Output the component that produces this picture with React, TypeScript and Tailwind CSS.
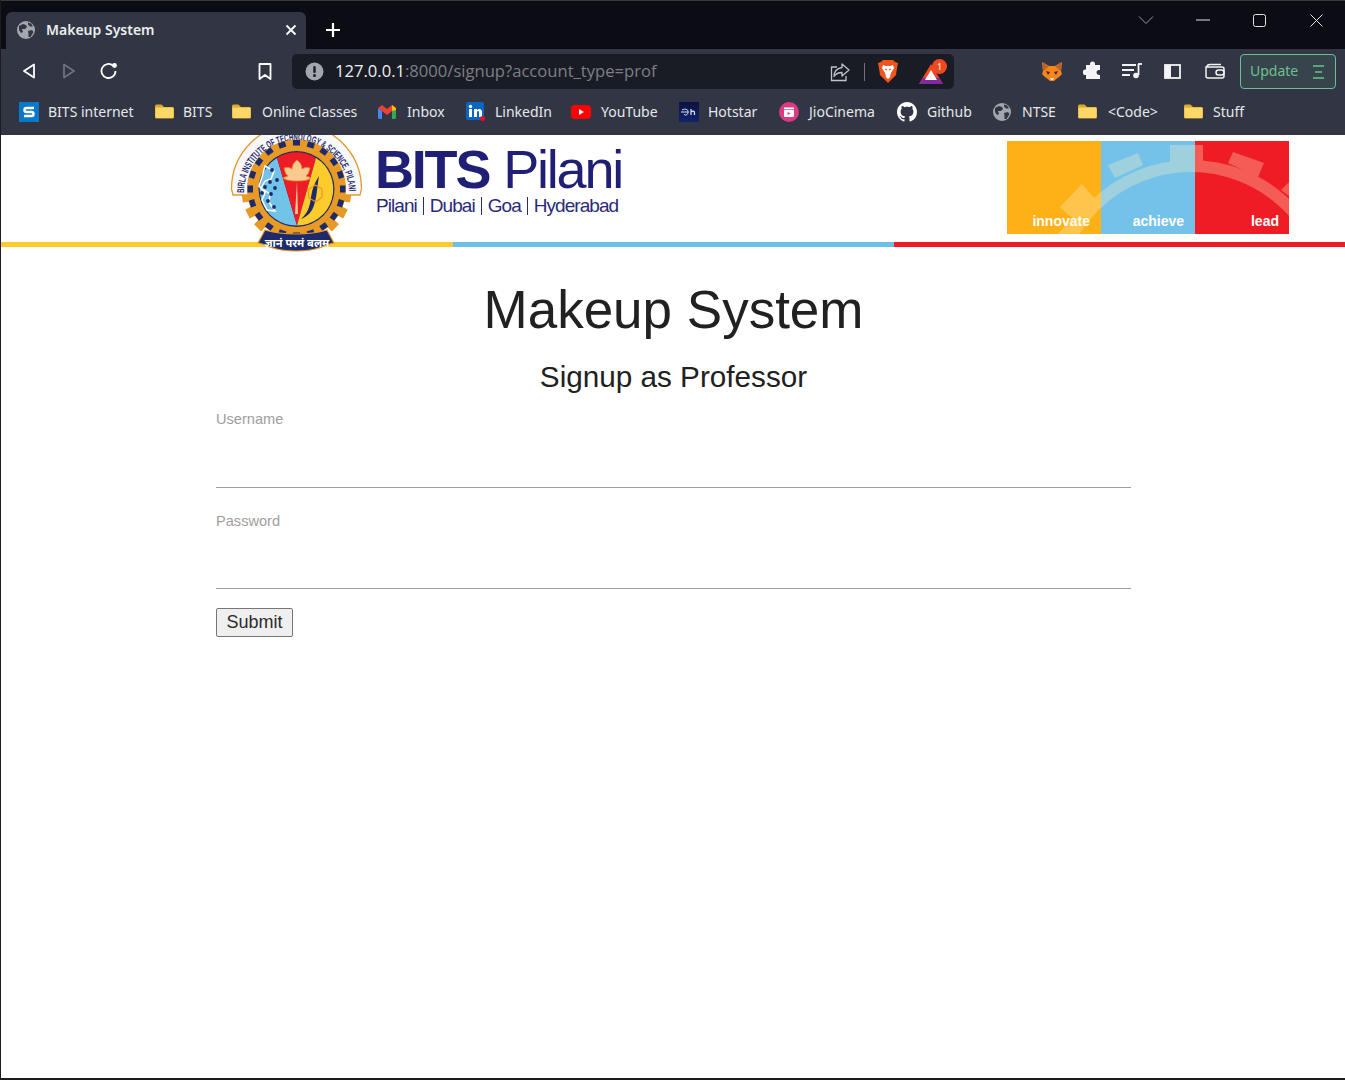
import React from "react";

const ui = { fontFamily: '"Noto Sans", "Open Sans", sans-serif' };
const arial = { fontFamily: '"Liberation Sans", Arial, sans-serif' };

function Globe({ size = 18, fill = "#a3a6ad", bg = "#323644" }: { size?: number; fill?: string; bg?: string }) {
  return (
    <svg width={size} height={size} viewBox="0 0 18 18" className="shrink-0">
      <circle cx="9" cy="9" r="9" fill={fill} />
      <path d="M2 5l4-2 3 1 1 2-2 2-3 0 1 3-2 1-2-3zM11 1.500l3 1 2 3-3 0-2-2zM11 10l4-1 1.500 2-3 5-2 0 0-3z" fill={bg} />
    </svg>
  );
}

function Folder() {
  return (
    <svg width="19" height="15" viewBox="0 0 19 15" className="shrink-0">
      <path d="M0 2a1.500 1.500 0 0 1 1.500-1.500h5L9 3h8.500A1.500 1.500 0 0 1 19 4.500V13a1.500 1.500 0 0 1-1.500 1.500h-16A1.500 1.500 0 0 1 0 13z" fill="#d9a92f" />
      <rect x="0.500" y="3.500" width="18" height="10.500" rx="1" fill="#fcd766" />
    </svg>
  );
}

function Mark({ label, icon, w, slot }: { label: string; icon: React.ReactNode; w: string; slot: string }) {
  return (
    <div className={`flex items-center shrink-0 ${w}`}>
      <span className={`shrink-0 flex items-center ${slot}`}>{icon}</span>
      <span className="text-[14px] text-[#e6e7ea] whitespace-nowrap">{label}</span>
    </div>
  );
}

const bookmarks: { label: string; w: string; slot: string; icon: React.ReactNode }[] = [
  {
    label: "BITS internet",
    w: "w-[136px]",
    slot: "w-[29px]",
    icon: (
      <svg width="20" height="20" viewBox="0 0 20 20">
        <rect width="20" height="20" fill="#0a78c8" />
        <path d="M15 6H7.500a1.500 1.500 0 0 0 0 4h5a1.700 1.700 0 0 1 0 4H5" fill="none" stroke="#fff" strokeWidth="2.400" />
      </svg>
    ),
  },
  { label: "BITS", w: "w-[77px]", slot: "w-[28px]", icon: <Folder /> },
  { label: "Online Classes", w: "w-[146px]", slot: "w-[30px]", icon: <Folder /> },
  {
    label: "Inbox",
    w: "w-[88px]",
    slot: "w-[29px]",
    icon: (
      <svg width="18" height="14" viewBox="0 0 18 14">
        <path d="M0 3v9.500A1.500 1.500 0 0 0 1.500 14H4V6z" fill="#4285f4" />
        <path d="M18 3v9.500a1.500 1.500 0 0 1-1.500 1.500H14V6z" fill="#34a853" />
        <path d="M0 3l4-3 5 4 5-4 4 3-4 3-5 4-5-4z" fill="#ea4335" />
        <path d="M14 0l4 3v2l-4 1z" fill="#fbbc04" />
      </svg>
    ),
  },
  {
    label: "LinkedIn",
    w: "w-[105px]",
    slot: "w-[29px]",
    icon: (
      <svg width="19" height="19" viewBox="0 0 19 19">
        <rect width="18" height="18" rx="2" fill="#0a66c2" />
        <rect x="3" y="7" width="3" height="8" fill="#fff" />
        <circle cx="4.500" cy="4.500" r="1.700" fill="#fff" />
        <path d="M8 7h3v1.200c1-1.800 5-2 5 1.800v5h-3v-4.500c0-2-2-2-2 0V15H8z" fill="#fff" />
        <circle cx="16.500" cy="16.500" r="2.500" fill="#e0102a" />
      </svg>
    ),
  },
  {
    label: "YouTube",
    w: "w-[108px]",
    slot: "w-[30px]",
    icon: (
      <svg width="20" height="14" viewBox="0 0 20 14">
        <rect width="20" height="14" rx="4" fill="#ff0000" />
        <path d="M8 4l5 3-5 3z" fill="#fff" />
      </svg>
    ),
  },
  {
    label: "Hotstar",
    w: "w-[100px]",
    slot: "w-[29px]",
    icon: (
      <svg width="20" height="20" viewBox="0 0 20 20">
        <defs>
          <linearGradient id="hs" x1="0" y1="0" x2="0" y2="1">
            <stop offset="0" stopColor="#0c1240" />
            <stop offset="1" stopColor="#10236e" />
          </linearGradient>
        </defs>
        <rect width="20" height="20" fill="url(#hs)" />
        <path d="M3 8c4-2 7 0 6 3s-4 2-4 1M2 10h7" fill="none" stroke="#dfe6ff" strokeWidth="1" />
        <path d="M12 7v6M12 10c2-1.500 3.500-1 3.500 1v2" fill="none" stroke="#dfe6ff" strokeWidth="1.200" />
      </svg>
    ),
  },
  {
    label: "JioCinema",
    w: "w-[118px]",
    slot: "w-[30px]",
    icon: (
      <svg width="20" height="20" viewBox="0 0 20 20">
        <circle cx="10" cy="10" r="10" fill="#dc3a82" />
        <rect x="5" y="8" width="10" height="7" rx="1" fill="#fff" />
        <path d="M5 5.500h10v1.800H5z" fill="#fff" />
        <path d="M8.500 10l3 1.500-3 1.500z" fill="#dc3a82" />
      </svg>
    ),
  },
  {
    label: "Github",
    w: "w-[96px]",
    slot: "w-[30px]",
    icon: (
      <svg width="20" height="20" viewBox="0 0 16 16">
        <path fill="#fff" d="M8 0C3.580 0 0 3.580 0 8c0 3.540 2.290 6.530 5.470 7.590.4.070.55-.17.55-.38 0-.19-.01-.82-.01-1.490-2.010.37-2.530-.49-2.690-.94-.09-.23-.48-.94-.82-1.130-.28-.15-.68-.52-.01-.53.630-.01 1.080.58 1.230.82.720 1.210 1.870.87 2.330.660.070-.52.280-.87.510-1.070-1.780-.2-3.640-.89-3.640-3.950 0-.87.310-1.590.820-2.150-.08-.2-.36-1.020.08-2.120 0 0 .67-.21 2.200.82.640-.18 1.320-.27 2-.27.680 0 1.360.09 2 .27 1.530-1.040 2.200-.82 2.200-.82.440 1.100.16 1.920.08 2.120.51.560.82 1.270.82 2.150 0 3.070-1.870 3.750-3.650 3.950.29.250.54.730.54 1.480 0 1.070-.01 1.930-.01 2.200 0 .21.150.46.550.38A8.013 8.013 0 0 0 16 8c0-4.420-3.580-8-8-8z" />
      </svg>
    ),
  },
  { label: "NTSE", w: "w-[85px]", slot: "w-[29px]", icon: <Globe /> },
  { label: "<Code>", w: "w-[106px]", slot: "w-[30px]", icon: <Folder /> },
  { label: "Stuff", w: "w-[70px]", slot: "w-[29px]", icon: <Folder /> },
];

function Emblem() {
  const cx = 67.5;
  const cy = 54;
  const teeth = Array.from({ length: 20 }, (_, i) => i * 18 + 9);
  return (
    <svg width="136" height="120" viewBox="0 0 136 120" className="absolute left-[228px] top-0">
      <defs>
        <path id="ringText" d="M15 58a52.500 52.500 0 0 1 105 0" />
      </defs>
      {teeth.map((a) => (
        <rect key={a} x={cx - 5} y={cy - 55} width="10" height="9" fill="#e79a26" transform={`rotate(${a} ${cx} ${cy})`} />
      ))}
      <path d="M2.500 54A65 65 0 0 1 132.500 54L131 60H4z" fill="#f8f8fb" stroke="#e39a2d" strokeWidth="1.300" />
      <text fontSize="10" fontWeight="700" fill="#1f2a6b" style={arial}>
        <textPath href="#ringText" textLength="163" lengthAdjust="spacingAndGlyphs">
          BIRLA INSTITUTE OF TECHNOLOGY &amp; SCIENCE, PILANI
        </textPath>
      </text>
      <circle cx={cx} cy={cy} r="49.500" fill="#e79a26" />
      {teeth.map((a) => (
        <rect key={a} x={cx - 3.500} y={cy - 49} width="7" height="5.500" fill="#1f2a6b" transform={`rotate(${a + 9} ${cx} ${cy})`} />
      ))}
      <circle cx={cx} cy={cy} r="38" fill="#1f2a6b" />
      <path d="M68 90.500L48 23A36.500 36.500 0 0 0 68 90.500z" fill="#72c3e8" />
      <path d="M68 90.500L48 23A36.500 36.500 0 0 1 87 23z" fill="#ee1c25" />
      <path d="M68 90.500L87 23A36.500 36.500 0 0 1 68 90.500z" fill="#fdcb2c" />
      <path d="M68 25c-3 2-5 5-5 9-3-2-5-2-8-1 1 3 1 6 4 8-2 1-4 1-5 2 4 3 9 3 14 3s10 0 14-3c-1-1-3-1-5-2 3-2 3-5 4-8-3-1-5-1-8 1 0-4-2-7-5-9z" fill="#f9c98f" stroke="#e07f1f" strokeWidth="0.800" />
      <path d="M68 46l-2 33h3z" fill="#f9c98f" />
      <path d="M72 84c6-5 9-12 10-22 1-8 4-15 8-21-2 11-2 23-6 32-2 5-7 9-12 11z" fill="#1f2a6b" />
      <path d="M79 55l7-5 7 4 0 8-6 5-7-4z" fill="none" stroke="#e79a26" strokeWidth="1.200" />
      <path d="M36 31l9 5-3 8-6 2-4 7 9 6-1 8 6 9-8-1-5-10 3-7-6-7 3-9z" fill="none" stroke="#fff" strokeWidth="1.500" />
      {[
        [43, 35],
        [48, 45],
        [41, 47],
        [46, 53],
        [36, 52],
        [42, 59],
        [33, 58],
        [39, 66],
        [45, 72],
      ].map(([x, y]) => (
        <circle key={`${x}-${y}`} cx={x} cy={y} r="1.900" fill="#1f2a6b" />
      ))}
      <path d="M36 95c10 3 20 4 31 4s21-1 31-4l7 13c-5 1-9 2-12 4-8 3-17 4-26 4s-18-1-26-4c-3-2-7-3-12-4z" fill="#1f2a6b" stroke="#e79a26" strokeWidth="1.200" />
      <text x="68" y="112" textAnchor="middle" fontSize="11" fontWeight="700" fill="#fff" style={{ fontFamily: '"Noto Sans", sans-serif' }}>
        ज्ञानं परमं बलम्
      </text>
    </svg>
  );
}

function BitsBanner() {
  return (
    <div className="relative h-[112px] shrink-0 bg-white">
      <div className="flex h-[107px]">
        <div className="ml-[374px] pt-[9px] text-[#1f1f75]" style={arial}>
          <div className="flex items-baseline h-[50px] leading-[50px] whitespace-nowrap">
            <span className="text-[54px] font-bold tracking-[-2.200px]">BITS</span>
            <span className="text-[54px] ml-[14px] tracking-[-2.200px]">Pilani</span>
          </div>
          <div className="ml-[1px] mt-[1px] flex items-center text-[19px] leading-[22px] tracking-[-0.950px] whitespace-nowrap text-[#2a2a7a]">
            <span>Pilani</span>
            <span className="mx-[6px] h-[18px] w-px bg-[#2a2a7a]" />
            <span>Dubai</span>
            <span className="mx-[6px] h-[18px] w-px bg-[#2a2a7a]" />
            <span>Goa</span>
            <span className="mx-[6px] h-[18px] w-px bg-[#2a2a7a]" />
            <span>Hyderabad</span>
          </div>
        </div>
        <div className="relative ml-auto mr-[56px] mt-[6px] flex h-[93px] w-[282px] text-white text-[14px] font-bold" style={arial}>
          <div className="w-[94px] h-full bg-[#feb017] flex items-end justify-end pr-[11px] pb-[2px]">innovate</div>
          <div className="w-[94px] h-full bg-[#74c2e9] flex items-end justify-end pr-[11px] pb-[2px]">achieve</div>
          <div className="w-[94px] h-full bg-[#ef1c25] flex items-end justify-end pr-[10px] pb-[2px]">lead</div>
          <svg width="282" height="93" viewBox="0 0 282 93" className="absolute left-0 top-0 pointer-events-none">
            <g opacity="0.3">
              <circle cx="184" cy="162" r="137" fill="none" stroke="#fff3c4" strokeWidth="12" />
              <path fill="#fff3c4" d="M101 24l30-12 5 12-28 13zM163 4h33v17h-33zM226 11l31 11-6 14-30-14zM274 49l8-8v14zM53 66l22-23 17 19-22 31H51l14-16z" />
            </g>
          </svg>
        </div>
      </div>
      <div className="flex h-[5px]">
        <div className="w-[452px] bg-[#fdcb2c]" />
        <div className="w-[441px] bg-[#6cc0e8]" />
        <div className="flex-1 bg-[#ef1c25]" />
      </div>
      <Emblem />
    </div>
  );
}

export default function App() {
  return (
    <div className="h-[1080px] w-[1345px] flex flex-col bg-white overflow-hidden border-l border-[#1c1c1c] border-b-2 box-border">
      {/* Title bar */}
      <div className="h-[49px] shrink-0 bg-[#0b0c14] border-t border-[#3a3a3a] flex items-end pl-[5px] relative" style={ui}>
        <div className="h-[37px] w-[300px] bg-[#323644] rounded-t-[6px] flex items-center pl-[11px] pr-[9px] pb-[1px]">
          <Globe />
          <span className="ml-[11px] mb-[1px] text-[14px] font-semibold text-[#eceded]">Makeup System</span>
          <svg width="12" height="12" viewBox="0 0 12 12" className="ml-auto">
            <path d="M1.500 1.500l9 9M10.500 1.500l-9 9" stroke="#fff" strokeWidth="1.800" />
          </svg>
        </div>
        <svg width="16" height="16" viewBox="0 0 16 16" className="ml-[19px] mb-[11px]">
          <path d="M8 1v14M1 8h14" stroke="#fff" strokeWidth="2.200" />
        </svg>
        <div className="ml-auto self-start flex items-center h-[38px] text-[#d8d8dc]">
          <svg width="16" height="10" viewBox="0 0 16 10" className="mr-[42px]">
            <path d="M1 1.500l7 7 7-7" fill="none" stroke="#9a9ba2" strokeWidth="1" />
          </svg>
          <svg width="14" height="2" viewBox="0 0 14 2" className="mr-[43px]">
            <path d="M0 1h14" stroke="#e4e4e6" strokeWidth="1" />
          </svg>
          <svg width="13" height="13" viewBox="0 0 13 13" className="mr-[44px]">
            <rect x="0.500" y="0.500" width="12" height="12" rx="2" fill="none" stroke="#e4e4e6" />
          </svg>
          <svg width="13" height="13" viewBox="0 0 13 13" className="mr-[22px]">
            <path d="M.5.500l12 12M12.500.500l-12 12" stroke="#e4e4e6" strokeWidth="1" />
          </svg>
        </div>
      </div>

      {/* Toolbar */}
      <div className="h-[40px] shrink-0 bg-[#323644] flex items-start pl-[21px]" style={ui}>
        <svg width="14" height="16" viewBox="0 0 14 16" className="mt-[14px]">
          <path d="M12 1.500v13L2 8z" fill="none" stroke="#fff" strokeWidth="1.800" strokeLinejoin="round" />
        </svg>
        <svg width="14" height="16" viewBox="0 0 14 16" className="ml-[26px] mt-[14px]">
          <path d="M2 1.500v13L12 8z" fill="none" stroke="#6f727c" strokeWidth="1.800" strokeLinejoin="round" />
        </svg>
        <svg width="18" height="18" viewBox="0 0 18 18" className="ml-[24px] mt-[13px]">
          <path d="M15.500 9a7 7 0 1 1-2.300-5.200" fill="none" stroke="#fff" strokeWidth="1.800" />
          <circle cx="14.500" cy="3.500" r="2.400" fill="#fff" />
        </svg>
        <svg width="14" height="17" viewBox="0 0 14 17" className="ml-[140px] mt-[14px]">
          <path d="M1.500 1h11v15L7 12l-5.500 4z" fill="none" stroke="#fff" strokeWidth="1.800" strokeLinejoin="round" />
        </svg>
        <div className="ml-[20px] mt-[5px] h-[35px] w-[662px] rounded-[5px] bg-[#1a1c25] flex items-center pl-[13px] pr-[7px]">
          <svg width="19" height="19" viewBox="0 0 19 19">
            <circle cx="9.500" cy="9.500" r="9" fill="#a3a6ad" />
            <rect x="8.300" y="4" width="2.400" height="7" rx="1" fill="#1a1c25" />
            <circle cx="9.500" cy="13.500" r="1.500" fill="#1a1c25" />
          </svg>
          <div className="ml-[11px] text-[16.600px] text-[#7d7f85] whitespace-nowrap" style={{ fontFamily: '"Open Sans", sans-serif' }}>
            <span className="text-[#eff0f2]">127.0.0.1</span>:8000/signup?account_type=prof
          </div>
          <svg width="20" height="20" viewBox="0 0 20 20" className="ml-auto">
            <path d="M7 5H1.500v13.500H16V14" fill="none" stroke="#c0c2c7" strokeWidth="1.300" />
            <path d="M12 2l7 6-7 6v-3.500c-4 0-6 1-8 4 0-5 3-8 8-9z" fill="none" stroke="#c0c2c7" strokeWidth="1.300" strokeLinejoin="round" />
          </svg>
          <div className="ml-[14px] w-px h-[18px] bg-[#70737b]" />
          <svg width="20" height="23" viewBox="0 0 20 23" className="ml-[13px]">
            <path d="M5 0h10l2 2 3 1-1 5-1 7-8 8-8-8-1-7-1-5 3-1z" fill="#f1541b" />
            <path d="M5 5l3 1h4l3-1 1 3-3 5-1 4-2 2-2-2-1-4-3-5z" fill="#fff" />
            <path d="M7 9l2 1M13 9l-2 1" stroke="#f1541b" strokeWidth="1.300" />
          </svg>
          <div className="relative ml-[21px] w-[28px] h-[24px]">
            <svg width="24" height="20" viewBox="0 0 24 20" className="absolute left-0 top-[4px]">
              <path d="M12 0L0 20h24z" fill="#f1491f" />
              <path d="M0 20l4-6h16l4 6z" fill="#7f2a9e" />
              <path d="M12 6l6 10H6z" fill="#fff" />
            </svg>
            <span className="absolute left-[13px] top-[-1px] w-[15px] h-[15px] rounded-full bg-[#ee4a21] text-white text-[9px] leading-[15px] text-center">1</span>
          </div>
        </div>
        <svg width="20" height="19" viewBox="0 0 20 19" className="ml-[88px] mt-[13px]">
          <path d="M0 0l7 4h6l7-4-1 9 1 3-3 3-4 3-1 1H8l-1-1-4-3-3-3 1-3z" fill="#f6851b" />
          <path d="M0 0l7 4-4 4-2 1zM20 0l-7 4 4 4 2 1z" fill="#b8652a" />
          <path d="M4 9l4 1-2 3zM16 9l-4 1 2 3z" fill="#3c2a1c" />
          <path d="M8 16h4l-1 2H9z" fill="#e9ddd0" />
        </svg>
        <svg width="20" height="20" viewBox="0 0 20 20" className="ml-[21px] mt-[12px]">
          <path d="M7 3a2.500 2.500 0 0 1 5 0v1h5v5h-1a2.500 2.500 0 0 0 0 5h1v4H3v-4H2a2.800 2.800 0 0 1 0-5.500h1V4h4z" fill="#f4f4f6" />
        </svg>
        <svg width="20" height="16" viewBox="0 0 20 16" className="ml-[19px] mt-[14px]">
          <path d="M0 2h14M0 7h12M0 12h8" stroke="#f4f4f6" strokeWidth="1.800" />
          <path d="M16.500 1v11" stroke="#f4f4f6" strokeWidth="1.800" />
          <path d="M16 1h4" stroke="#f4f4f6" strokeWidth="1.800" />
          <circle cx="14" cy="12.500" r="2.800" fill="#f4f4f6" />
        </svg>
        <svg width="17" height="15" viewBox="0 0 17 15" className="ml-[22px] mt-[15px]">
          <rect x="1" y="1" width="15" height="13" fill="none" stroke="#f4f4f6" strokeWidth="1.800" />
          <rect x="1" y="1" width="6" height="13" fill="#f4f4f6" />
        </svg>
        <svg width="20" height="16" viewBox="0 0 20 16" className="ml-[24px] mt-[14px]">
          <path d="M2 4c0-1.500 1-2.500 3-2.500h11M1 4v9a2 2 0 0 0 2 2h14a2 2 0 0 0 2-2V6a2 2 0 0 0-2-2z" fill="none" stroke="#f4f4f6" strokeWidth="1.500" />
          <rect x="11" y="7" width="8" height="5" rx="2.500" fill="#323644" stroke="#f4f4f6" strokeWidth="1.500" />
        </svg>
        <div className="ml-[15px] mt-[5px] h-[35px] w-[96px] rounded-[4px] border border-[#6cc08f] bg-[#37444c] flex items-center pl-[9px] pb-[2px] text-[14px] text-[#6cc08f]">
          <span>Update</span>
          <svg width="12" height="14" viewBox="0 0 12 14" className="ml-[15px] mt-[2px]">
            <path d="M0 1h11M2 7h7M0 13h11" stroke="#6cc08f" strokeWidth="1.300" />
          </svg>
        </div>
      </div>

      {/* Bookmarks */}
      <div className="h-[46px] shrink-0 bg-[#323644] flex items-center pl-[18px] pb-[1px]" style={ui}>
        {bookmarks.map((b) => (
          <Mark key={b.label} {...b} />
        ))}
      </div>

      <BitsBanner />

      {/* Page */}
      <main className="w-[915px] ml-[215px] text-[#212121]" style={arial}>
        <h1 className="mt-[31px] text-center text-[53px] leading-[64px] font-normal">Makeup System</h1>
        <h2 className="mt-[17px] text-center text-[29.700px] leading-[36px] font-normal">Signup as Professor</h2>
        <form className="mt-[14px]">
          <label className="block text-[14.600px] leading-[20px] text-[#9e9e9e]">Username</label>
          <input type="text" className="block mt-[7px] w-full h-[52px] border-b border-[#9e9e9e] outline-none" />
          <label className="block mt-[23px] text-[14.600px] leading-[20px] text-[#9e9e9e]">Password</label>
          <input type="password" className="block mt-[9px] w-full h-[49px] border-b border-[#9e9e9e] outline-none" />
          <button type="button" className="block mt-[19px] w-[77px] h-[29px] bg-[#efefef] border border-[#767676] rounded-[2px] text-[18px] leading-[27px] text-[#2b2b2b] text-center">
            Submit
          </button>
        </form>
      </main>
    </div>
  );
}
